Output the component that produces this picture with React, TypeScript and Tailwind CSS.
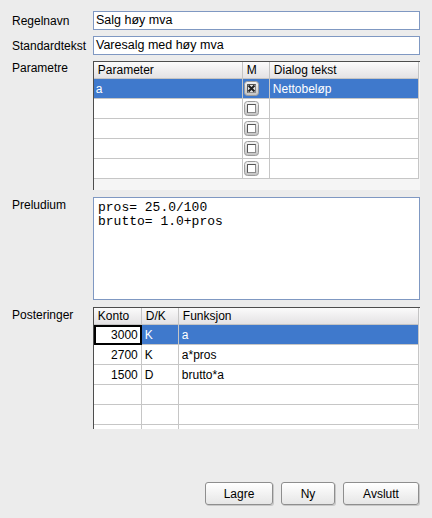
const font = { fontFamily: '"Liberation Sans", Arial, sans-serif' };

function Check({ on }: { on?: boolean }) {
  return (
    <svg width="15" height="15" viewBox="0 0 15 15">
      <defs>
        <linearGradient id={on ? "cbg1" : "cbg0"} x1="0" y1="0" x2="0" y2="1">
          <stop offset="0" stopColor="#f4f4f4" />
          <stop offset="1" stopColor="#c2c2c2" />
        </linearGradient>
      </defs>
      <rect x="0.5" y="0.5" width="14" height="14" rx="3" fill={`url(#${on ? "cbg1" : "cbg0"})`} stroke="#9c9c9c" />
      <rect x="3.5" y="3.5" width="8" height="8" fill="#ffffff" stroke="#8c8c8c" />
      <path d="M3.5 11.5V3.5H11.5" fill="none" stroke="#555" />
      {on && (
        <>
          <rect x="4" y="4" width="7" height="7" fill="#e6e6e6" />
          <path d="M4.5 4.5L10.5 10.5M10.5 4.5L4.5 10.5" stroke="#222" strokeWidth="2" />
        </>
      )}
    </svg>
  );
}

function Field({ label, value }: { label: string; value: string }) {
  return (
    <div className="flex items-center h-[19px]">
      <span className="w-[81px] text-[12px] text-black">{label}</span>
      <div className="flex-1 h-[19px] bg-white border border-[#7f98c2] pl-[2px] flex items-center text-[12.5px] text-black">
        {value}
      </div>
    </div>
  );
}

const hdr = "h-[17px] flex items-center pl-[4px] border-r border-b border-[#c4c4c4] bg-gradient-to-b from-[#fbfbfb] to-[#e4e2e4] text-[12px] text-black";
const cell = "h-[20px] flex items-center border-r border-b border-[#c6c6c6] text-[12px]";

function ParamTable() {
  const rows = [
    { p: "a", m: true, d: "Nettobeløp", sel: true },
    { p: "", m: false, d: "" },
    { p: "", m: false, d: "" },
    { p: "", m: false, d: "" },
    { p: "", m: false, d: "" },
  ];
  return (
    <div className="w-[328px] h-[129px] border-l border-t border-[#4d4d4d] bg-[#f5f5f5]">
      <div className="grid grid-cols-[149px_27px_149px] w-[325px]">
        <div className={hdr}>Parameter</div>
        <div className={hdr}>M</div>
        <div className={hdr}>Dialog tekst</div>
        {rows.map((r, i) => (
          <div key={i} className="contents">
            <div className={`${cell} pl-[2px] ${r.sel ? "bg-[#3f79cc] text-white" : "bg-white text-black"}`}>{r.p}</div>
            <div className={`${cell} pl-[1px] ${r.sel ? "bg-[#3f79cc]" : "bg-white"}`}>
              <Check on={r.m} />
            </div>
            <div className={`${cell} pl-[3px] ${r.sel ? "bg-[#3f79cc] text-white" : "bg-white text-black"}`}>{r.d}</div>
          </div>
        ))}
      </div>
    </div>
  );
}

function PostTable() {
  const rows = [
    { k: "3000", dk: "K", f: "a", sel: true },
    { k: "2700", dk: "K", f: "a*pros" },
    { k: "1500", dk: "D", f: "brutto*a" },
    { k: "", dk: "", f: "" },
    { k: "", dk: "", f: "" },
  ];
  return (
    <div className="w-[328px] h-[122px] border-l border-t border-[#4d4d4d] bg-[#f5f5f5] overflow-hidden">
      <div className="grid grid-cols-[48px_37px_240px] w-[325px]">
        <div className={hdr}>Konto</div>
        <div className={hdr}>D/K</div>
        <div className={hdr}>Funksjon</div>
        {rows.map((r, i) => (
          <div key={i} className="contents">
            {r.sel ? (
              <div className="h-[20px] flex items-center justify-end pr-[2px] border-2 border-black bg-white text-[12px] text-black">{r.k}</div>
            ) : (
              <div className={`${cell} justify-end pr-[3px] bg-white text-black`}>{r.k}</div>
            )}
            <div className={`${cell} pl-[3px] ${r.sel ? "bg-[#3f79cc] text-white" : "bg-white text-black"}`}>{r.dk}</div>
            <div className={`${cell} pl-[3px] ${r.sel ? "bg-[#3f79cc] text-white" : "bg-white text-black"}`}>{r.f}</div>
          </div>
        ))}
        <div className="h-[6px] border-r border-[#c6c6c6] bg-white" />
        <div className="h-[6px] border-r border-[#c6c6c6] bg-white" />
        <div className="h-[6px] border-r border-[#c6c6c6] bg-white" />
      </div>
    </div>
  );
}

function Btn({ label, w }: { label: string; w: string }) {
  return (
    <button
      className={`${w} h-[23px] rounded-[3px] border border-[#8e8e8e] bg-gradient-to-b from-[#ffffff] to-[#e6e6e6] shadow-[1px_1px_0_#c8c8c8] text-[12px] text-black`}
    >
      {label}
    </button>
  );
}

export default function App() {
  return (
    <div className="w-[432px] h-[518px] bg-[#ececec] flex flex-col pl-[12px] pr-[12px] pt-[11px]" style={font}>
      <Field label="Regelnavn" value="Salg høy mva" />
      <div className="mt-[6px]">
        <Field label="Standardtekst" value="Varesalg med høy mva" />
      </div>
      <div className="mt-[6px] flex">
        <span className="w-[81px] text-[12px] text-black leading-[14px]">Parametre</span>
        <ParamTable />
      </div>
      <div className="mt-[7px] flex">
        <span className="w-[81px] text-[12px] text-black leading-[14px] pt-[1px]">Preludium</span>
        <div
          className="flex-1 h-[103px] bg-white border border-[#7f98c2] pl-[4px] pt-[3px] text-[13px] leading-[14px] text-black whitespace-pre"
          style={{ fontFamily: '"Liberation Mono", "Courier New", monospace' }}
        >
          {"pros= 25.0/100\nbrutto= 1.0+pros"}
        </div>
      </div>
      <div className="mt-[7px] flex">
        <span className="w-[81px] text-[12px] text-black leading-[14px] pt-[1px]">Posteringer</span>
        <PostTable />
      </div>
      <div className="mt-[53px] flex justify-end gap-[8px] pr-[1px]">
        <Btn label="Lagre" w="w-[68px]" />
        <Btn label="Ny" w="w-[54px]" />
        <Btn label="Avslutt" w="w-[76px]" />
      </div>
    </div>
  );
}
